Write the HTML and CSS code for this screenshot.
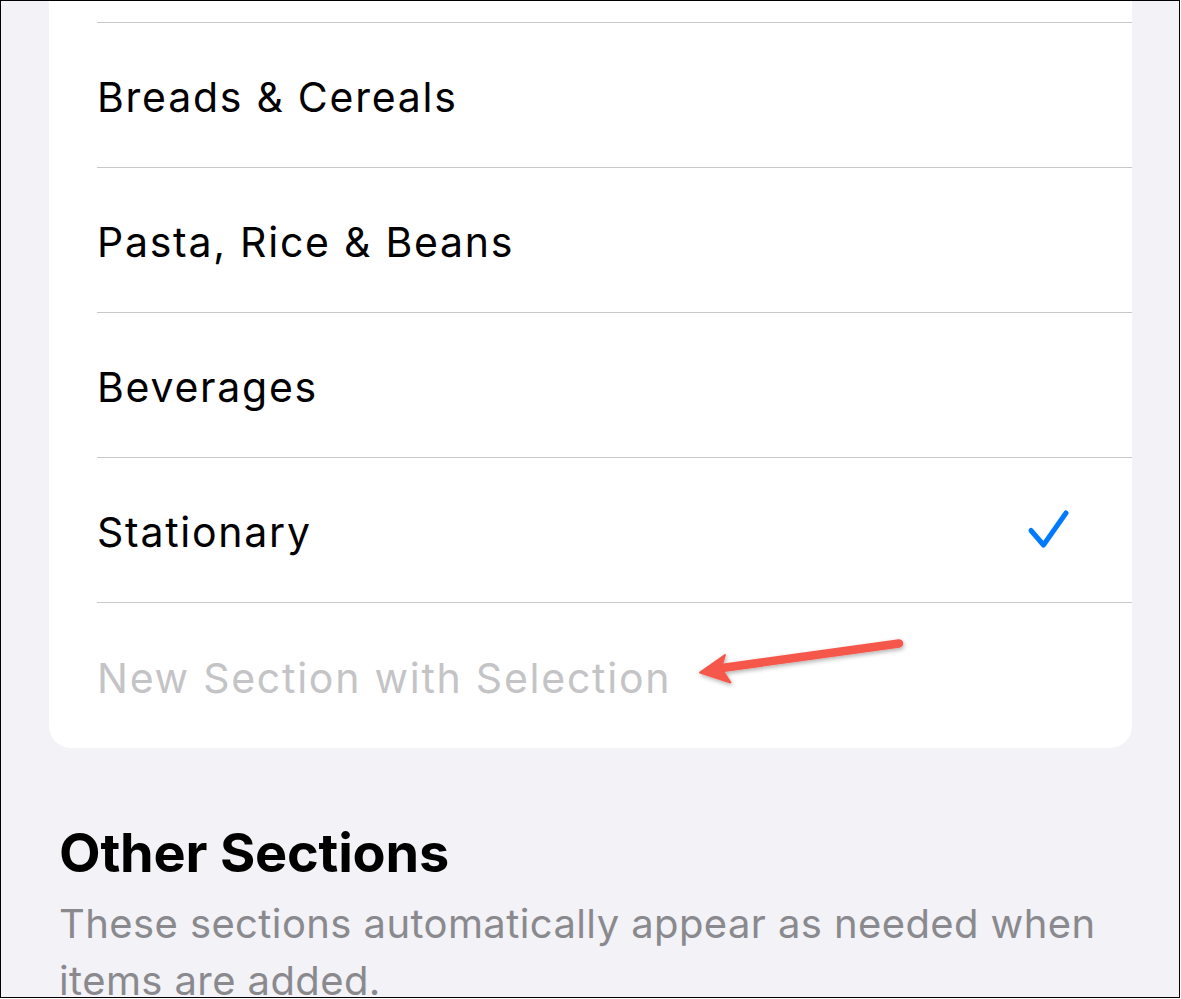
FILE: index.html
```html
<!DOCTYPE html>
<html>
<head>
<meta charset="utf-8">
<link rel="stylesheet" href="styles.css">
</head>
<body>
<div class="frame">
  <div class="card">
    <div class="row"><span class="label">Breads &amp; Cereals</span></div>
    <div class="row"><span class="label">Pasta, Rice &amp; Beans</span></div>
    <div class="row"><span class="label">Beverages</span></div>
    <div class="row"><span class="label">Stationary</span>
      <svg class="check" width="44" height="44" viewBox="0 0 44 44"><path d="M5 21.5 L17.5 36 L40 4" fill="none" stroke="#007aff" stroke-width="5" stroke-linecap="round" stroke-linejoin="round"/></svg>
    </div>
    <div class="row last"><span class="label muted">New Section with Selection</span></div>
  </div>
  <h2 class="heading">Other Sections</h2>
  <p class="desc">These sections automatically appear as needed when items are added.</p>
  <svg class="arrow" width="1181" height="999" viewBox="0 0 1181 999">
    <defs>
      <filter id="sh" x="-20%" y="-50%" width="140%" height="200%">
        <feDropShadow dx="1" dy="2" stdDeviation="2" flood-color="#000" flood-opacity="0.3"/>
      </filter>
    </defs>
    <g filter="url(#sh)" fill="#f5584b" stroke="#f5584b">
      <line x1="899" y1="643.5" x2="722" y2="668" stroke-width="8.5" stroke-linecap="round"/>
      <path d="M700 672.5 L725 655 L721 668 L730.5 682.5 Z" stroke-width="2" stroke-linejoin="round"/>
    </g>
  </svg>
</div>
</body>
</html>
```
FILE: styles.css
```css
html, body {
  margin: 0;
  padding: 0;
  background: #ffffff;
}
.frame {
  position: relative;
  width: 1180px;
  height: 998px;
  box-sizing: border-box;
  border: 1px solid #000;
  background: #f2f2f7;
  overflow: hidden;
  font-family: Inter, "Noto Sans", sans-serif;
}
.card {
  margin-left: 48px;
  width: 1083px;
  padding-top: 21px;
  background: #ffffff;
  border-radius: 0 0 22px 22px;
}
.row {
  margin-left: 48px;
  height: 145px;
  box-sizing: border-box;
  border-top: 1px solid #c8c7cc;
  padding-top: 4px;
  padding-right: 62px;
  display: flex;
  align-items: center;
  justify-content: space-between;
}
.row.last {
  height: 146px;
}
.label {
  font-size: 41px;
  color: #000;
  letter-spacing: 1.75px;
}
.label.muted {
  color: #c4c4c6;
}
.check {
  margin-top: -2px;
}
.heading {
  margin: 73px 0 0 58px;
  font-size: 54px;
  line-height: 64px;
  font-weight: 700;
  color: #000;
  letter-spacing: -0.2px;
}
.desc {
  margin: 10px 40px 0 58px;
  font-size: 40px;
  line-height: 57px;
  color: #8a8a8e;
  letter-spacing: 0.4px;
}
.arrow {
  position: absolute;
  left: -1px;
  top: -1px;
  pointer-events: none;
}
```
